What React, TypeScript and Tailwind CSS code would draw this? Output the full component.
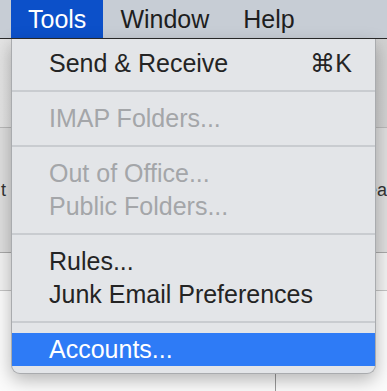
import { JSX } from "react";

type Item = { label: string; disabled?: boolean; shortcut?: string; active?: boolean };

const groups: Item[][] = [
  [{ label: "Send & Receive", shortcut: "⌘K" }],
  [{ label: "IMAP Folders...", disabled: true }],
  [
    { label: "Out of Office...", disabled: true },
    { label: "Public Folders...", disabled: true },
  ],
  [{ label: "Rules..." }, { label: "Junk Email Preferences" }],
  [{ label: "Accounts...", active: true }],
];

function MenuRow({ item }: { item: Item }): JSX.Element {
  return (
    <div
      className={`flex h-[33px] items-center justify-between pl-[37px] pr-[23px] text-[25px] leading-[33px] ${
        item.active
          ? "bg-[#2e7bf6] text-white"
          : item.disabled
          ? "text-[#a4a6a9]"
          : "text-[#242424]"
      }`}
    >
      <span>{item.label}</span>
      {item.shortcut && <span>{item.shortcut}</span>}
    </div>
  );
}

export default function App(): JSX.Element {
  return (
    <div
      className="relative flex h-[391px] w-[387px] flex-col overflow-hidden bg-white"
      style={{ fontFamily: '"Liberation Sans", Arial, sans-serif' }}
    >
      {/* menu bar */}
      <div className="flex h-[39px] shrink-0 border-b border-[#2a2a2a] bg-[#c7cdd5] pl-[11px] text-[25px] leading-[38px] text-[#1e1e1e]">
        <div className="bg-[#0c50c9] px-[17px] text-white">Tools</div>
        <div className="px-[17px]">Window</div>
        <div className="px-[17px]">Help</div>
      </div>

      {/* window behind */}
      <div className="h-[89px] shrink-0 border-b border-[#b9b9b9] bg-gradient-to-r from-[#e4e4e4] to-[#d2d2d2]" />
      <div className="flex h-[125px] shrink-0 items-center justify-between border-b border-[#a9a9a9] bg-[#dedede] text-[18px] text-[#333]">
        <span className="pl-[1px]">t</span>
        <span>ea</span>
      </div>
      <div className="h-[38px] shrink-0 border-b border-[#c4c4c4] bg-[#f2f2f2]" />
      <div className="flex flex-1 bg-[#fbfbfb]">
        <div className="w-[276px] border-r border-[#9a9a9a]" />
      </div>

      {/* dropdown menu */}
      <div className="absolute left-[11px] top-[39px] w-[365px] rounded-b-[9px] border border-t-0 border-[#a9abae] bg-[#e3e5e8] pb-[7px] pt-[8px] shadow-[0_6px_18px_rgba(0,0,0,0.28)]">
        {groups.map((group, gi) => (
          <div key={gi}>
            {gi > 0 && (
              <div className="flex h-[22px] items-center">
                <div className="h-[2px] w-full bg-[#c9ccd0]" />
              </div>
            )}
            {group.map((item) => (
              <MenuRow key={item.label} item={item} />
            ))}
          </div>
        ))}
      </div>
    </div>
  );
}
